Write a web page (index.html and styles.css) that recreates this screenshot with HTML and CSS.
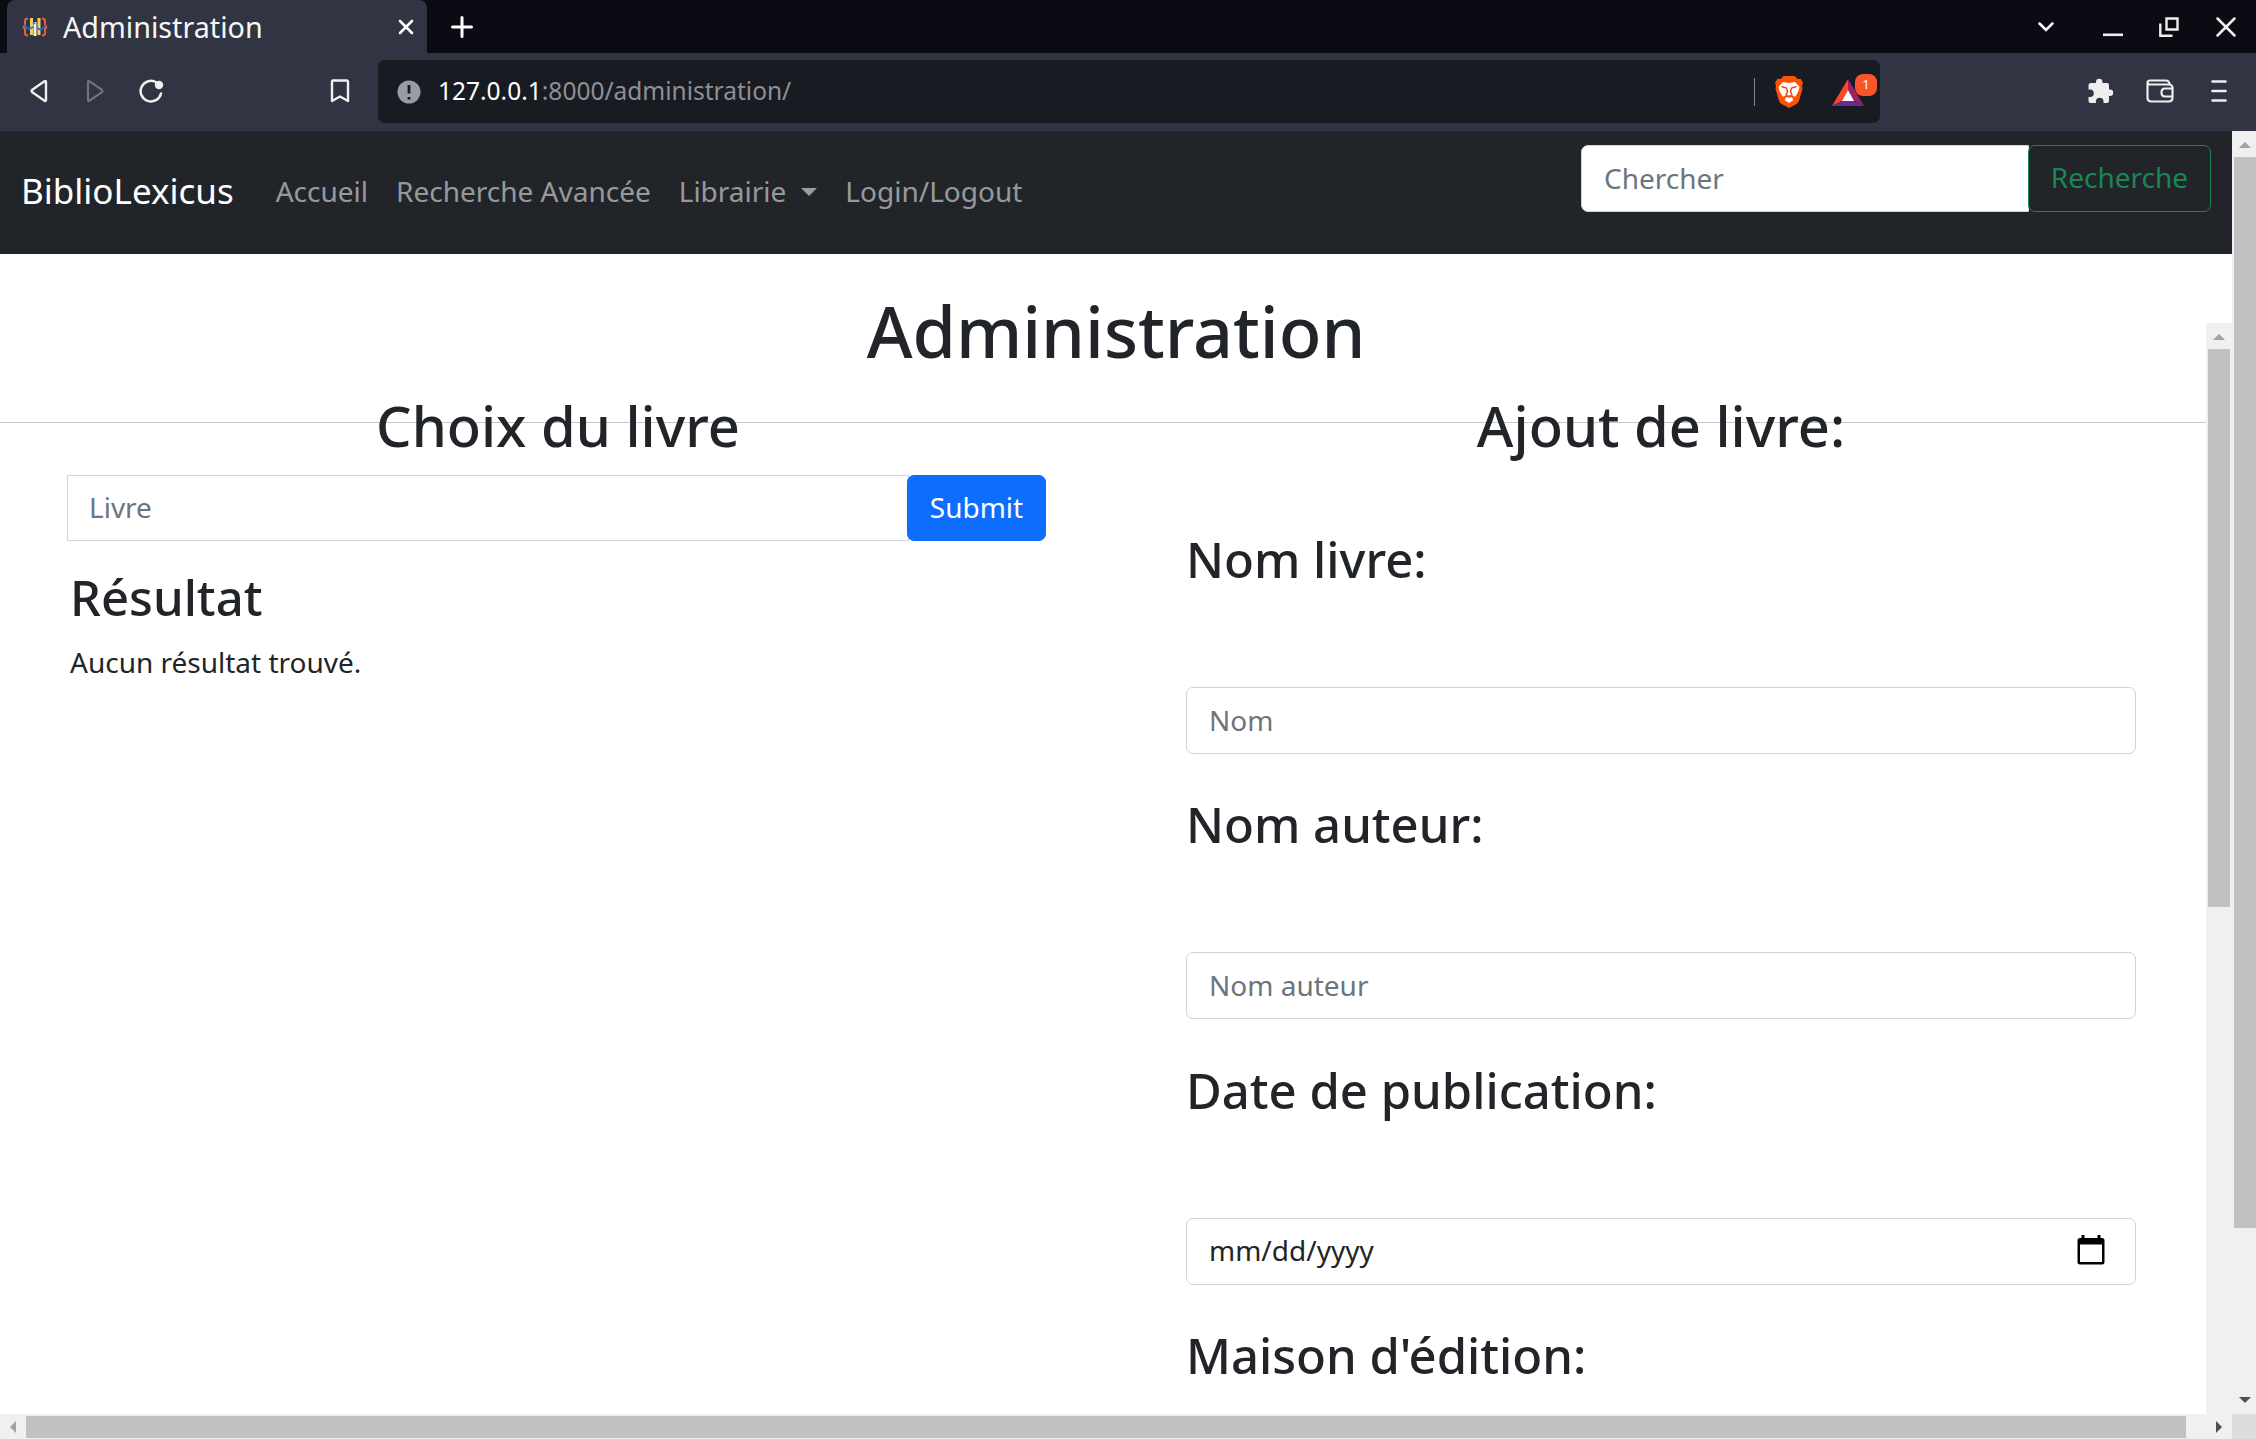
FILE: index.html
```html
<!DOCTYPE html>
<html lang="fr">
<head>
<meta charset="utf-8">
<title>Administration</title>
<link rel="stylesheet" href="styles.css">
</head>
<body>
<div class="window">
  <header class="tabstrip">
    <div class="tab">
      <svg class="tab-icon" width="26" height="20" viewBox="0 0 26 20" fill="none">
        <path d="M6 1.500Q3 1.500 3 4v3Q3 9.500 1 10Q3 10.500 3 13v3Q3 18.500 6 18.500M20 1.500Q23 1.500 23 4v3Q23 9.500 25 10Q23 10.500 23 13v3Q23 18.500 20 18.500" stroke="#e8603c" stroke-width="2"/>
        <path d="M8 1h3v17H8zM15.500 1h3v17h-3z" fill="#f5cf66"/>
        <path d="M11.500 5h3v14h-3z" fill="#f4f1e6"/>
        <path d="M2 8l5 4 4-2M24 8l-5 5-4-2M11 5l2 2" stroke="#1672d8" stroke-width="1.700"/>
      </svg>
      <span class="tab-title">Administration</span>
      <svg class="tab-close" width="16" height="16" viewBox="0 0 16 16"><path d="M2 2l12 12M14 2L2 14" stroke="#fff" stroke-width="2.600" stroke-linecap="round"/></svg>
    </div>
    <svg class="new-tab" width="22" height="22" viewBox="0 0 22 22"><path d="M11 1.500v19M1.500 11h19" stroke="#fff" stroke-width="3" stroke-linecap="round"/></svg>
    <div class="window-buttons">
      <svg width="18" height="12" viewBox="0 0 18 12" fill="none"><path d="M2.500 2.500l6.500 6.500 6.500-6.500" stroke="#fff" stroke-width="2.500" stroke-linecap="round"/></svg>
      <svg width="20" height="20" viewBox="0 0 20 20"><path d="M0 17.800h20" stroke="#eee" stroke-width="2.600"/></svg>
      <svg width="20" height="20" viewBox="0 0 20 20" fill="none" stroke="#eee" stroke-width="2.400"><path d="M7.500 1.500h11v11h-11zM1.300 6.500v12.200h12.200"/></svg>
      <svg width="20" height="20" viewBox="0 0 20 20"><path d="M1.500 1.500l17 17M18.500 1.500l-17 17" stroke="#eee" stroke-width="2.500" stroke-linecap="round"/></svg>
    </div>
  </header>

  <div class="toolbar">
    <div class="nav-buttons">
      <svg width="18" height="24" viewBox="0 0 18 24" fill="none"><path d="M14.500 2.300Q16 1.300 16 3v18q0 1.700-1.500.700L2.300 13.300Q1 12 2.300 10.700z" stroke="#f0f0f0" stroke-width="2.400" stroke-linejoin="round"/></svg>
      <svg width="18" height="24" viewBox="0 0 18 24" fill="none"><path d="M3.500 2.300Q2 1.300 2 3v18q0 1.700 1.500.700l12.200-8.400Q17 12 15.700 10.700z" stroke="#71737e" stroke-width="2.200" stroke-linejoin="round"/></svg>
      <svg width="26" height="24" viewBox="0 0 26 24" fill="none"><path d="M17.500 3.500A10.300 10.300 0 1 0 22 14.500" stroke="#f0f0f0" stroke-width="2.500" stroke-linecap="round"/><circle cx="20" cy="6" r="4.200" fill="#f0f0f0"/></svg>
    </div>
    <svg class="bookmark" width="20" height="24" viewBox="0 0 20 24" fill="none"><path d="M3 1.500h13.500q1.500 0 1.500 1.500v19l-8-4.500L2 22V3q0-1.500 1-1.500z" stroke="#f0f0f0" stroke-width="2.400" stroke-linejoin="round"/></svg>
    <div class="address">
      <svg width="24" height="24" viewBox="0 0 24 24"><circle cx="12" cy="12" r="11.500" fill="#9a9ca5"/><path d="M12 5v8.500M12 17v2.500" stroke="#191b22" stroke-width="2.800"/></svg>
      <span class="url"><b>127.0.0.1</b>:8000/administration/</span>
      <span class="address-rule"></span>
      <svg class="brave" width="28" height="32" viewBox="0 0 28 32">
        <path d="M8.500 0h11l3 3 3-.300 2.500 4-1 3 .500 3-3.500 12q-.500 2-2.500 3.300L14 32l-7.500-4q-2-1.300-2.500-3.300L.500 12.700l.500-3-1-3 2.500-4 3 .300z" fill="#fb5205"/>
        <path d="M8 6l6 1 6-1 4.500 5-1 4-3 5.500L17 22l1.500 2-4.500 3-4.500-3L11 22l-3.500-1.500-3-5.500-1-4z" fill="#fff"/>
        <path d="M6.500 10.500l5 1.500 1 3.500-1.500 3.500 3 2 3-2-1.500-3.500 1-3.500 5-1.500M8.500 21l5.500-1 5.500 1" fill="none" stroke="#ee4d08" stroke-width="1.500"/>
      </svg>
      <span class="rewards">
        <svg width="32" height="27" viewBox="0 0 32 27"><path d="M16 0L0 27l10.500-5.500L16 11z" fill="#ff4724"/><path d="M16 0l16 27-10.500-5.500L16 11z" fill="#9e1f63"/><path d="M0 27h32l-10.500-5.500h-11z" fill="#662d91"/><path d="M16 11l6 11H10z" fill="#fff"/></svg>
        <span class="badge">1</span>
      </span>
    </div>
    <div class="extensions">
      <svg width="26" height="26" viewBox="0 0 26 26"><path d="M3 5h5V4a3.200 3.200 0 0 1 6.400 0v1H19q2 0 2 2v4.500h1a3.200 3.200 0 0 1 0 6.400h-1V23q0 2-2 2h-3.500v-1.500a3.800 3.800 0 0 0-7.600 0V25H2.500Q.500 25 .500 23v-4H2a3.800 3.800 0 0 0 0-7.600H.500V7Q.500 5 3 5z" fill="#eee"/></svg>
      <svg width="28" height="24" viewBox="0 0 28 24" fill="none" stroke="#eee" stroke-width="2.200"><path d="M1.500 3.500v15q0 4 4 4h17q4 0 4-4V9q0-3.500-4-3.500H4q-2.500-.300-2.500-2T4 1.500h16q3 0 4 4.500M26.500 9.500H19q-3.500 0-3.500 4t3.500 4h7.500"/></svg>
      <svg width="16" height="24" viewBox="0 0 16 24"><path d="M1.500 2.500h13M1.500 12h13M1.500 21.500h13" stroke="#eee" stroke-width="2.600" stroke-linecap="round"/></svg>
    </div>
  </div>

  <div class="viewport">
    <div class="page">
      <nav class="navbar">
        <a class="brand">BiblioLexicus</a>
        <a class="nav-link">Accueil</a>
        <a class="nav-link">Recherche Avancée</a>
        <a class="nav-link dropdown">Librairie</a>
        <a class="nav-link">Login/Logout</a>
        <form class="search">
          <input class="control search-input" type="text" placeholder="Chercher">
          <button class="btn btn-outline" type="button">Recherche</button>
        </form>
      </nav>

      <div class="content">
        <main class="main">
          <h1>Administration</h1>
          <hr class="rule">
          <div class="columns">
            <section class="choose">
              <h2>Choix du livre</h2>
              <form class="choose-form">
                <input class="control square" type="text" placeholder="Livre">
                <button class="btn btn-primary" type="button">Submit</button>
              </form>
              <h3>Résultat</h3>
              <p>Aucun résultat trouvé.</p>
            </section>
            <section class="add">
              <h2>Ajout de livre:</h2>
              <div class="group"><h3>Nom livre:</h3><input class="control" type="text" placeholder="Nom"></div>
              <div class="group"><h3>Nom auteur:</h3><input class="control" type="text" placeholder="Nom auteur"></div>
              <div class="group"><h3>Date de publication:</h3>
                <div class="control date"><span>mm/dd/yyyy</span>
                  <svg width="28" height="30" viewBox="0 0 28 30"><path d="M4.500 0h3v3h13V0h3v3H25q2.500 0 2.500 2.500V27q0 2.500-2.500 2.500H3Q.500 29.500.500 27V5.500Q.500 3 3 3h1.500zM3 9.500V27h22V9.500z" fill="#000"/></svg>
                </div>
              </div>
              <div class="group"><h3>Maison d'édition:</h3></div>
            </section>
          </div>
        </main>
        <div class="scroll-v inner">
          <svg width="12" height="6" viewBox="0 0 12 6"><path d="M0 6l6-6 6 6z" fill="#a3a3a3"/></svg>
          <span class="thumb"></span>
        </div>
      </div>
    </div>
    <div class="scroll-v outer">
      <svg width="12" height="6" viewBox="0 0 12 6"><path d="M0 6l6-6 6 6z" fill="#a3a3a3"/></svg>
      <span class="thumb"></span>
      <svg class="down" width="12" height="6" viewBox="0 0 12 6"><path d="M0 0l6 6 6-6z" fill="#505050"/></svg>
    </div>
    <div class="scroll-h">
      <svg width="6" height="12" viewBox="0 0 6 12"><path d="M6 0L0 6l6 6z" fill="#a3a3a3"/></svg>
      <span class="thumb"></span>
      <svg class="right" width="6" height="12" viewBox="0 0 6 12"><path d="M0 0l6 6-6 6z" fill="#505050"/></svg>
    </div>
    <div class="corner"></div>
  </div>
</div>
</body>
</html>
```
FILE: styles.css
```css
* { box-sizing: border-box; }

body {
  margin: 0;
  overflow: hidden;
  font: 400 28px/42px "Noto Sans", sans-serif;
  color: #212529;
  background: #fff;
}

svg { display: block; flex: none; }

.window {
  display: flex;
  flex-direction: column;
  width: 2256px;
  height: 1439px;
}

/* Tab strip */
.tabstrip {
  display: flex;
  align-items: center;
  flex: none;
  height: 53px;
  padding: 0 10px 0 7px;
  background: #0b0b14;
}
.tab {
  display: flex;
  align-items: center;
  width: 420px;
  height: 53px;
  padding: 0 13px 0 15px;
  border-radius: 8px 8px 0 0;
  background: #313442;
}
.tab-title {
  flex: 1;
  margin-left: 15px;
  font-size: 28.700px;
  color: #f7f7f8;
}
.new-tab { margin-left: 24px; }
.window-buttons {
  display: flex;
  align-items: center;
  margin-left: auto;
  padding-right: 10px;
}
.window-buttons svg:nth-child(2) { margin-left: 48px; }
.window-buttons svg:nth-child(3) { margin-left: 36px; }
.window-buttons svg:nth-child(4) { margin-left: 37px; }

/* Toolbar */
.toolbar {
  display: flex;
  align-items: center;
  flex: none;
  height: 78px;
  padding: 0 29px 2px 30px;
  background: #313442;
}
.nav-buttons { display: flex; gap: 38px; width: 300px; }
.nav-buttons svg:nth-child(3) { margin-left: -3px; }
.bookmark { margin-right: 28px; }
.address {
  display: flex;
  align-items: center;
  width: 1502px;
  height: 63px;
  margin-top: 1px;
  padding: 0 3px 0 19px;
  border-radius: 7px;
  background: #191b22;
}
.url {
  flex: 1;
  margin: -1px 0 0 17px;
  font-size: 24.500px;
  color: #8f9093;
}
.url b { font-weight: 400; color: #fff; }
.address-rule { width: 1px; height: 28px; background: #85868b; }
.brave { margin-left: 20px; }
.rewards { position: relative; width: 45px; margin-left: 29px; }
.rewards svg { margin-top: 1px; }
.badge {
  position: absolute;
  top: -4px;
  left: 23px;
  width: 22px;
  height: 22px;
  border-radius: 8px;
  background: #fb542b;
  color: #fff;
  font-size: 13px;
  line-height: 21px;
  text-align: center;
}
.extensions {
  display: flex;
  align-items: center;
  gap: 32px;
  margin-left: auto;
}
.extensions svg:last-child { margin-left: 5px; }

/* Viewport with its scrollbars */
.viewport {
  display: grid;
  grid-template: 1283px 25px / 2232px 24px;
}
.page {
  display: flex;
  flex-direction: column;
  overflow: hidden;
}
.scroll-v, .scroll-h { display: flex; background: #f0f0f0; }
.scroll-v { flex-direction: column; align-items: center; }
.scroll-h { align-items: center; padding: 0 10px; }
.thumb { flex: none; background: #c1c1c1; }
.scroll-v svg { margin-top: 11px; }
.scroll-v .thumb { width: 22px; margin-top: 9px; }
.outer { padding-left: 2px; }
.outer .thumb { height: 1071px; }
.outer .down { margin-top: auto; margin-bottom: 11px; }
.inner { width: 26px; flex: none; margin-top: 69px; }
.inner .thumb { height: 558px; }
.scroll-h .thumb { width: 2160px; height: 22px; margin-left: 10px; }
.scroll-h .right { margin-left: auto; }
.corner { background: #dcdcdc; }

/* Site navbar */
.navbar {
  display: flex;
  align-items: center;
  flex: none;
  height: 123px;
  padding: 0 21px 4px;
  background: #212529;
}
.brand { margin-right: 42px; font-size: 35px; color: #fff; }
.nav-link { margin-right: 28px; color: rgba(255, 255, 255, .55); }
.dropdown { display: flex; align-items: center; }
.dropdown::after {
  content: "";
  margin: 2px 0 0 15px;
  border: 8px solid transparent;
  border-top-color: currentColor;
  border-bottom: 0;
}
.search { display: flex; align-self: flex-start; margin: 14px 0 0 auto; }

.control {
  width: 100%;
  height: 67px;
  padding: 0 22px 2px;
  border: 1px solid #ced4da;
  border-radius: 7px;
  background: #fff;
  color: #212529;
  font: inherit;
}
.control::placeholder { color: #6c757d; opacity: 1; }
.search-input { width: 448px; border-radius: 7px 0 0 7px; }
.btn {
  flex: none;
  height: 67px;
  padding: 0 0 3px;
  border: 1px solid;
  border-radius: 7px;
  background: none;
  font: inherit;
}
.btn-outline { width: 183px; margin-left: -1px; border-color: #198754; color: #198754; }
.btn-primary { width: 139px; height: 66px; margin-left: -2px; padding-bottom: 2px; border-color: #0d6efd; background: #0d6efd; color: #fff; }

/* Administration page */
.content { display: flex; flex: 1; min-height: 0; }
.main { position: relative; z-index: 0; width: 2206px; }
h1, h2, h3, p { margin: 0; }
h1, h2, h3 { font-weight: 500; line-height: 1.2; }
h1 {
  height: 138px;
  padding: 35px 0 0 26px;
  font-size: 70px;
  text-align: center;
}
h2 { height: 83px; font-size: 56px; text-align: center; }
h3 { font-size: 49px; }
.rule {
  position: absolute;
  z-index: -1;
  top: 168px;
  left: 0;
  width: 100%;
  height: 1px;
  margin: 0;
  border: 0;
  background: #c8c9ca;
}
.columns { display: grid; grid-template-columns: 979px 950px; gap: 140px; padding-left: 67px; }
.choose h2 { padding-left: 3px; }
.choose-form { display: flex; margin-bottom: 27px; }
.square { height: 66px; padding-left: 21px; border-radius: 0; }
.choose h3, .choose p { padding-left: 3px; }
.choose p { margin-top: 14px; }
.add h2 { height: 138px; }
.group { height: 265.300px; }
.group h3 { height: 157px; }
.date { display: flex; align-items: center; justify-content: space-between; padding-right: 30px; }
.date svg { margin-top: -1px; }
```
